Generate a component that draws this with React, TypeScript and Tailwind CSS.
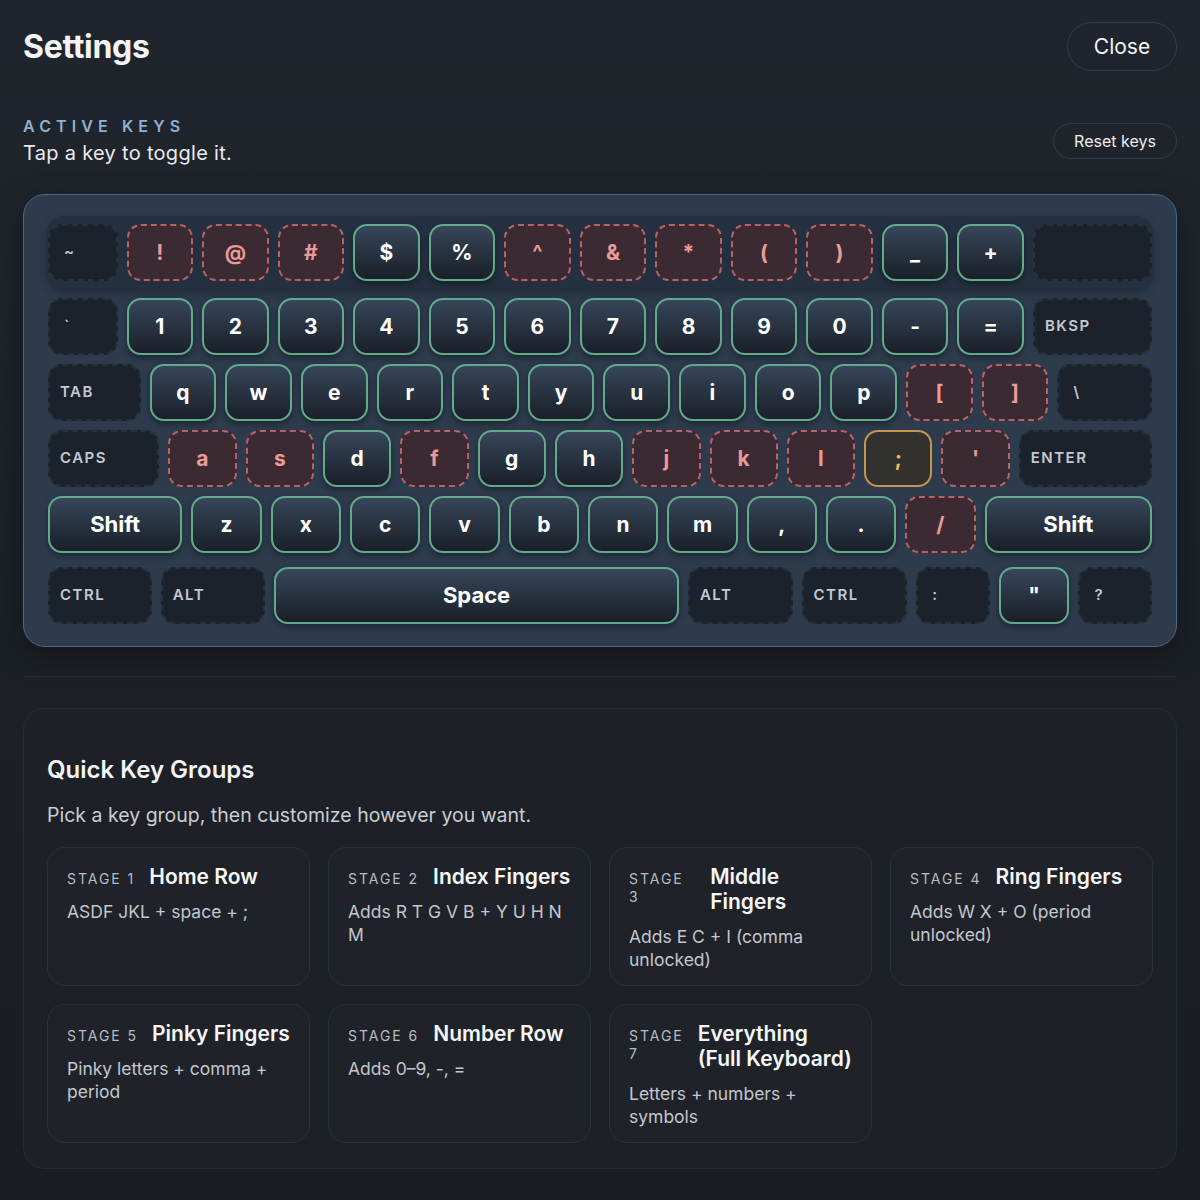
import React from 'react'

type KeyState = 'on' | 'off' | 'dis' | 'hl'

type Key = {
  l: string
  s: KeyState
  w: string
  mod?: boolean
  big?: boolean
}

const on = (l: string, w = 'basis-[67px]'): Key => ({ l, s: 'on', w })
const off = (l: string, w = 'basis-[67px]'): Key => ({ l, s: 'off', w })
const dis = (l: string, w: string, mod = false): Key => ({ l, s: 'dis', w, mod })

const topRow: Key[] = [
  dis('~', 'basis-[70px]'),
  off('!'), off('@'), off('#'), on('$'), on('%'), off('^'), off('&'), off('*'), off('('), off(')'), on('_'), on('+'),
  dis('', 'basis-[120px]'),
]

const rows: Key[][] = [
  [
    dis('`', 'basis-[70px]'),
    on('1'), on('2'), on('3'), on('4'), on('5'), on('6'), on('7'), on('8'), on('9'), on('0'), on('-'), on('='),
    dis('BKSP', 'basis-[120px]', true),
  ],
  [
    dis('TAB', 'basis-[93px]', true),
    on('q'), on('w'), on('e'), on('r'), on('t'), on('y'), on('u'), on('i'), on('o'), on('p'), off('['), off(']'),
    dis('\\', 'basis-[95px]'),
  ],
  [
    dis('CAPS', 'basis-[111px]', true),
    off('a', 'basis-[68px]'), off('s', 'basis-[68px]'), on('d', 'basis-[68px]'), off('f', 'basis-[68px]'),
    on('g', 'basis-[68px]'), on('h', 'basis-[68px]'), off('j', 'basis-[68px]'), off('k', 'basis-[68px]'),
    off('l', 'basis-[68px]'), { l: ';', s: 'hl', w: 'basis-[68px]' }, off("'", 'basis-[68px]'),
    dis('ENTER', 'basis-[133px]', true),
  ],
  [
    { l: 'Shift', s: 'on', w: 'basis-[134px]', big: true },
    on('z', 'basis-[70px]'), on('x', 'basis-[70px]'), on('c', 'basis-[70px]'), on('v', 'basis-[70px]'),
    on('b', 'basis-[70px]'), on('n', 'basis-[70px]'), on('m', 'basis-[70px]'), on(',', 'basis-[70px]'),
    on('.', 'basis-[70px]'), off('/', 'basis-[70px]'),
    { l: 'Shift', s: 'on', w: 'basis-[167px]', big: true },
  ],
]

const bottomRow: Key[] = [
  dis('CTRL', 'basis-[103px]', true),
  dis('ALT', 'basis-[104px]', true),
  { l: 'Space', s: 'on', w: 'basis-[404px]', big: true },
  dis('ALT', 'basis-[104px]', true),
  dis('CTRL', 'basis-[105px]', true),
  dis(':', 'basis-[73px]'),
  on('"', 'basis-[70px]'),
  dis('?', 'basis-[73px]'),
]

const stateClass: Record<KeyState, string> = {
  on: 'border-2 border-[#63a98c] bg-linear-to-b from-[#37465a] to-[#1a2029] text-white shadow-[0_3px_6px_rgba(0,0,0,0.35)]',
  off: 'border-2 border-dashed border-[#b4636a] bg-[#3b2a31] text-[#eb9a9a]',
  dis: 'border-2 border-dashed border-[#28303b] bg-[#1c222b] text-[#c4c9d1]',
  hl: 'border-2 border-[#c3954f] bg-[#33312d] text-[#f0b95c]',
}

function KeyCap({ k }: { k: Key }) {
  const leftAligned = k.s === 'dis'
  return (
    <button
      className={`${k.w} grow shrink min-w-0 h-[57px] rounded-[14px] flex items-center ${
        leftAligned ? 'justify-start' : 'justify-center'
      } ${stateClass[k.s]}`}
    >
      {k.mod ? (
        <span className="pl-[10px] text-[15px] font-semibold tracking-[0.1em]">{k.l}</span>
      ) : leftAligned ? (
        <span className="pl-[14px] text-[15px] font-semibold">{k.l}</span>
      ) : k.big ? (
        <span className="text-[22px] font-bold">{k.l}</span>
      ) : (
        <span className="text-[21px] font-bold">{k.l}</span>
      )}
    </button>
  )
}

const stages = [
  { n: 1, title: 'Home Row', desc: 'ASDF JKL + space + ;' },
  { n: 2, title: 'Index Fingers', desc: 'Adds R T G V B + Y U H N M' },
  { n: 3, title: 'Middle Fingers', desc: 'Adds E C + I (comma unlocked)' },
  { n: 4, title: 'Ring Fingers', desc: 'Adds W X + O (period unlocked)' },
  { n: 5, title: 'Pinky Fingers', desc: 'Pinky letters + comma + period' },
  { n: 6, title: 'Number Row', desc: 'Adds 0–9, -, =' },
  { n: 7, title: 'Everything (Full Keyboard)', desc: 'Letters + numbers + symbols' },
]

export default function App() {
  return (
    <div
      className="min-h-[1200px] bg-linear-to-b from-[#20252d] to-[#1a1d22] px-[23px] pt-[22px] pb-[34px] text-white"
      style={{ fontFamily: 'Inter, "Noto Sans", sans-serif' }}
    >
      <div className="flex items-center justify-between h-[49px]">
        <h1 className="text-[32px] font-bold tracking-[-0.01em] text-[#f3f4f6]">Settings</h1>
        <button className="h-[49px] w-[110px] rounded-full border border-[#363c46] text-[21px] text-[#f3f4f6]">
          Close
        </button>
      </div>

      <div className="mt-[46px] flex items-center justify-between">
        <div>
          <div className="text-[16px] font-semibold tracking-[0.32em] text-[#8db0d6] leading-[18px]">ACTIVE KEYS</div>
          <div className="mt-[6px] text-[20px] tracking-[0.015em] text-[#e8eaed] leading-[24px]">
            Tap a key to toggle it.
          </div>
        </div>
        <button className="h-[36px] w-[124px] rounded-full border border-[#363c46] text-[16px] text-[#eceef1]">
          Reset keys
        </button>
      </div>

      <div className="mt-[29px] rounded-[22px] border border-[#4e6684] bg-[#2d3b4d] px-[23px] pt-[21px] pb-[22px] shadow-[0_10px_30px_rgba(0,0,0,0.35)]">
        <div className="flex gap-[9px] rounded-[16px] bg-[#243040] px-[1px] py-[8px] shadow-[0_4px_10px_rgba(0,0,0,0.25)]">
          {topRow.map((k, i) => (
            <KeyCap key={i} k={k} />
          ))}
        </div>
        {rows.map((row, r) => (
          <div key={r} className="mt-[9px] flex gap-[9px] px-[1px]">
            {row.map((k, i) => (
              <KeyCap key={i} k={k} />
            ))}
          </div>
        ))}
        <div className="mt-[14px] flex gap-[9px] px-[1px]">
          {bottomRow.map((k, i) => (
            <KeyCap key={i} k={k} />
          ))}
        </div>
      </div>

      <div className="mt-[29px] h-px bg-[#2a2f37]" />

      <div className="mt-[31px] rounded-[22px] border border-[#282c34] bg-[#1d2026] px-[23px] pt-[43px] pb-[25px]">
        <h2 className="text-[24px] font-semibold text-[#f3f4f6]">Quick Key Groups</h2>
        <p className="mt-[13px] text-[19.5px] text-[#c9cdd3]">Pick a key group, then customize however you want.</p>
        <div className="mt-[17px] grid grid-cols-4 gap-[18px]">
          {stages.map((s) => (
            <div
              key={s.n}
              className="min-h-[136px] rounded-[18px] border border-[#2c3038] bg-[#1f2228] px-[19px] pt-[16px] pb-[14px]"
            >
              <div className="flex items-baseline gap-[14px]">
                <span className="text-[14px] tracking-[0.14em] text-[#b8bdc5] leading-[18px]">STAGE {s.n}</span>
                <span className="text-[21px] font-semibold text-[#f5f6f8] leading-[25px]">{s.title}</span>
              </div>
              <p className="mt-[11px] text-[17.5px] leading-[23px] text-[#c3c7ce]">{s.desc}</p>
            </div>
          ))}
        </div>
      </div>
    </div>
  )
}
